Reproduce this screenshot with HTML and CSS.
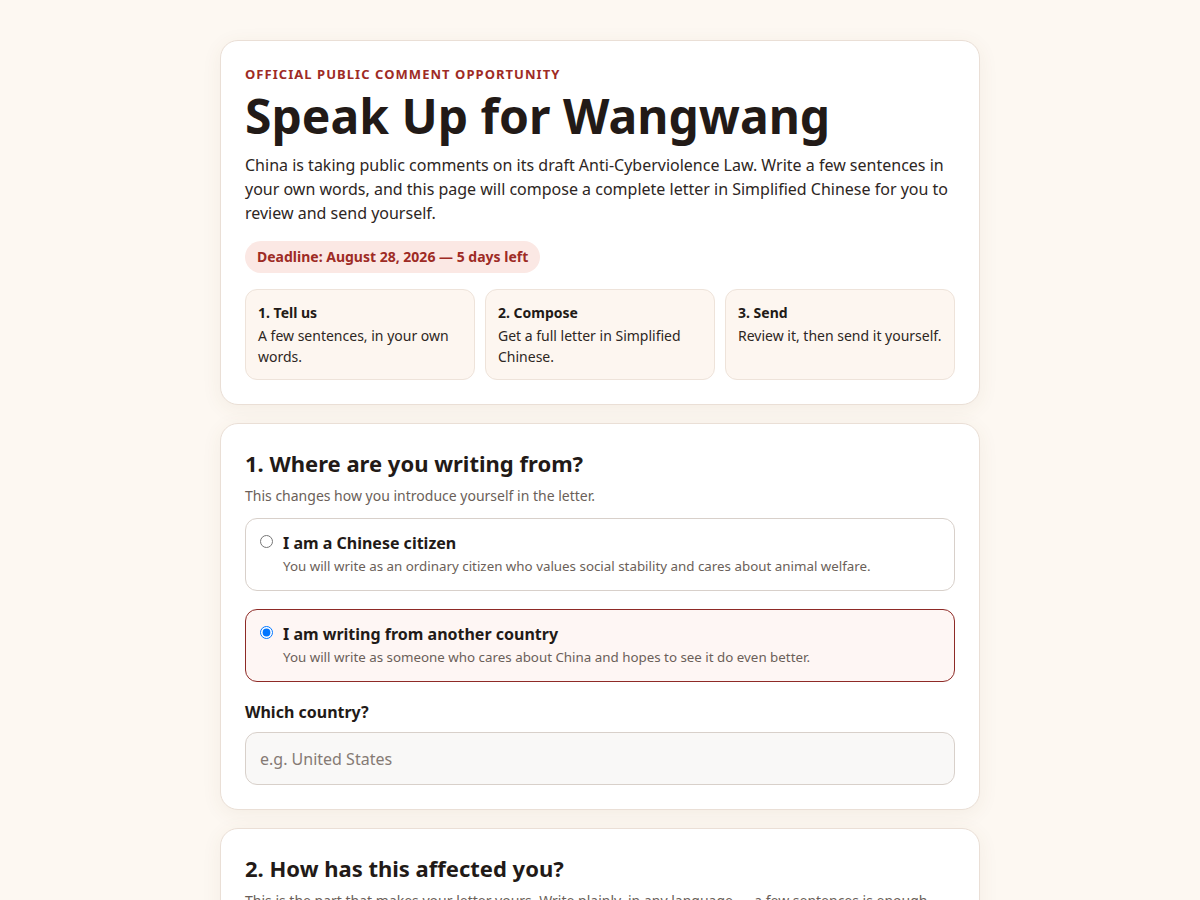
FILE: index.html
```html
<!DOCTYPE html>
<html lang="en">
<head>
<meta charset="utf-8">
<title>Speak Up for Wangwang</title>
<link rel="stylesheet" href="styles.css">
</head>
<body>
<main class="page">
  <section class="card hero">
    <div class="eyebrow">OFFICIAL PUBLIC COMMENT OPPORTUNITY</div>
    <h1 class="title">Speak Up for Wangwang</h1>
    <p class="lede">China is taking public comments on its draft Anti-Cyberviolence Law. Write a few sentences in your own words, and this page will compose a complete letter in Simplified Chinese for you to review and send yourself.</p>
    <div class="deadline">Deadline: August 28, 2026 — 5 days left</div>
    <div class="steps">
      <div class="step"><div class="step-title">1. Tell us</div><div class="step-text">A few sentences, in your own words.</div></div>
      <div class="step"><div class="step-title">2. Compose</div><div class="step-text">Get a full letter in Simplified Chinese.</div></div>
      <div class="step"><div class="step-title">3. Send</div><div class="step-text">Review it, then send it yourself.</div></div>
    </div>
  </section>

  <section class="card">
    <h2 class="section-title">1. Where are you writing from?</h2>
    <p class="section-sub">This changes how you introduce yourself in the letter.</p>
    <div class="options">
      <label class="option">
        <input type="radio" name="origin" class="radio">
        <span class="option-body">
          <span class="option-title">I am a Chinese citizen</span>
          <span class="option-text">You will write as an ordinary citizen who values social stability and cares about animal welfare.</span>
        </span>
      </label>
      <label class="option selected">
        <input type="radio" name="origin" class="radio" checked>
        <span class="option-body">
          <span class="option-title">I am writing from another country</span>
          <span class="option-text">You will write as someone who cares about China and hopes to see it do even better.</span>
        </span>
      </label>
    </div>
    <label class="field-label" for="country">Which country?</label>
    <input id="country" class="text-input" type="text" placeholder="e.g. United States">
  </section>

  <section class="card">
    <h2 class="section-title">2. How has this affected you?</h2>
    <p class="section-sub">This is the part that makes your letter yours. Write plainly, in any language — a few sentences is enough.</p>
  </section>
</main>
</body>
</html>
```

FILE: styles.css
```css
* { box-sizing: border-box; }
html, body { margin: 0; padding: 0; }
body {
  background: #fdf8f2;
  font-family: "Noto Sans", "Open Sans", sans-serif;
  color: #221a17;
}
.page {
  width: 760px;
  margin: 0 auto;
  padding: 40px 0;
  display: flex;
  flex-direction: column;
  gap: 18px;
}
.card {
  background: #ffffff;
  border: 1px solid #eadfd6;
  border-radius: 18px;
  padding: 24px 24px 24px;
  box-shadow: 0 4px 20px rgba(120, 80, 40, 0.07);
}
.eyebrow {
  font-size: 13px;
  font-weight: 700;
  letter-spacing: 1.05px;
  color: #9e2b25;
  line-height: 18px;
}
.title {
  margin: 3px 0 0;
  font-size: 48px;
  line-height: 60px;
  font-weight: 700;
  color: #221a17;
}
.lede {
  margin: 7px 0 0;
  font-size: 16px;
  line-height: 24px;
  color: #2d2623;
}
.deadline {
  display: inline-block;
  margin-top: 16px;
  background: #fbe8e4;
  color: #9e2b25;
  font-weight: 700;
  font-size: 14px;
  line-height: 20px;
  padding: 6px 12px;
  border-radius: 16px;
}
.steps {
  margin-top: 16px;
  display: grid;
  grid-template-columns: repeat(3, 1fr);
  gap: 10px;
}
.step {
  background: #fdf6f0;
  border: 1px solid #eee3da;
  border-radius: 12px;
  padding: 13px 12px 12px;
  min-height: 90px;
  font-size: 14px;
  line-height: 21px;
}
.step-title { font-weight: 700; color: #221a17; line-height: 20px; margin-bottom: 2px; }
.step-text { color: #2d2623; }

.section-title {
  margin: 0;
  font-size: 22px;
  line-height: 30px;
  font-weight: 700;
}
.section-sub {
  margin: 8px 0 0;
  font-size: 14px;
  line-height: 20px;
  color: #6b5f59;
}
.options {
  margin-top: 12px;
  display: flex;
  flex-direction: column;
  gap: 18px;
}
.option {
  display: flex;
  align-items: flex-start;
  gap: 10px;
  border: 1px solid #d8d0ca;
  border-radius: 12px;
  padding: 13px 14px 14px;
  cursor: pointer;
}
.option.selected {
  border-color: #8e2a26;
  background: #fef6f4;
}
.radio {
  margin: 3px 0 0;
  width: 13px;
  height: 13px;
}
.option-body { display: flex; flex-direction: column; }
.option-title { font-size: 16px; font-weight: 700; line-height: 22px; color: #221a17; }
.option-text { font-size: 13.35px; line-height: 20px; color: #6b5f59; margin-top: 2px; }
.field-label {
  display: block;
  margin-top: 19px;
  font-size: 16px;
  font-weight: 700;
  line-height: 22px;
}
.text-input {
  display: block;
  width: 100%;
  margin-top: 9px;
  height: 53px;
  border: 1px solid #d8d0ca;
  border-radius: 12px;
  background: #f9f8f7;
  padding: 0 14px;
  font-family: inherit;
  font-size: 16px;
  color: #221a17;
}
.text-input::placeholder { color: #857a74; }
```
